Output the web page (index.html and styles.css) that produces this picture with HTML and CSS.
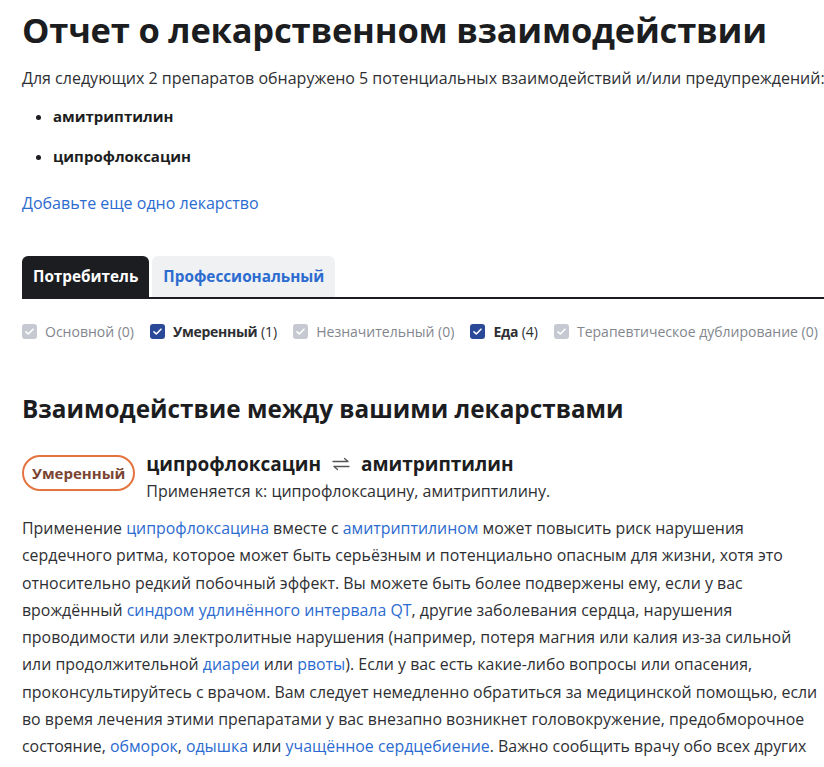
FILE: index.html
```html
<!DOCTYPE html>
<html lang="ru">
<head>
    <meta charset="UTF-8">
    <meta name="viewport" content="width=device-width, initial-scale=1.0">
    <title>Отчет о лекарственном взаимодействии</title>
    <link rel="stylesheet" href="styles.css">
</head>
<body>
    <div class="page">
        <h1>Отчет о лекарственном взаимодействии</h1>
        <p class="summary">Для следующих 2 препаратов обнаружено 5 потенциальных взаимодействий и/или предупреждений:</p>

        <ul class="drug-list">
            <li>амитриптилин</li>
            <li>ципрофлоксацин</li>
        </ul>

        <a href="#" class="add-link">Добавьте еще одно лекарство</a>

        <!-- Вкладки -->
        <div class="tabs">
            <span class="tab active">Потребитель</span>
            <span class="tab">Профессиональный</span>
        </div>

        <!-- Фильтры -->
        <div class="filters">
            <label class="filter"><span class="box"></span>Основной (0)</label>
            <label class="filter on"><span class="box"></span><b>Умеренный</b>&nbsp;(1)</label>
            <label class="filter"><span class="box"></span>Незначительный (0)</label>
            <label class="filter on"><span class="box"></span><b>Еда</b>&nbsp;(4)</label>
            <label class="filter"><span class="box"></span>Терапевтическое дублирование (0)</label>
        </div>

        <h2>Взаимодействие между вашими лекарствами</h2>

        <div class="interaction">
            <span class="badge">Умеренный</span>
            <div class="interaction-head">
                <div class="pair">ципрофлоксацин
                    <svg class="swap" width="20" height="14" viewBox="0 0 20 14">
                        <path d="M2 4.5h15M13.5 1.5l3.5 3M18 9.5H3M6.5 12.5L3 9.5" fill="none" stroke="#555" stroke-width="1.3" stroke-linecap="round"/>
                    </svg>
                    амитриптилин</div>
                <div class="applies">Применяется к: ципрофлоксацину, амитриптилину.</div>
            </div>
        </div>

        <p class="text">Применение <a href="#">ципрофлоксацина</a> вместе с <a href="#">амитриптилином</a> может повысить риск нарушения сердечного ритма, которое может быть серьёзным и потенциально опасным для жизни, хотя это относительно редкий побочный эффект. Вы можете быть более подвержены ему, если у вас врождённый <a href="#">синдром удлинённого интервала QT</a>, другие заболевания сердца, нарушения проводимости или электролитные нарушения (например, потеря магния или калия из-за сильной или продолжительной <a href="#">диареи</a> или <a href="#">рвоты</a>). Если у вас есть какие-либо вопросы или опасения, проконсультируйтесь с врачом. Вам следует немедленно обратиться за медицинской помощью, если во время лечения этими препаратами у вас внезапно возникнет головокружение, предобморочное состояние, <a href="#">обморок</a>, <a href="#">одышка</a> или <a href="#">учащённое сердцебиение</a>. Важно сообщить врачу обо всех других</p>
    </div>
</body>
</html>
```

FILE: styles.css
```css
body {
    margin: 0;
    font-family: "Open Sans", "Noto Sans", sans-serif;
    color: #2e2f33;
    background: #fff;
    overflow: hidden;
}

.page {
    padding: 6px 0 0 22px;
}

a {
    color: #2c6bd0;
    text-decoration: none;
}

h1 {
    margin: 0;
    font-size: 34.5px;
    font-weight: 700;
    color: #1c1d21;
    letter-spacing: -0.2px;
}

.summary {
    margin: 14px 0 0;
    font-size: 16px;
    white-space: nowrap;
}

.drug-list {
    margin: 16px 0 0;
    padding-left: 31px;
    font-size: 15px;
    font-weight: 700;
    color: #1c1d21;
}

.drug-list li {
    line-height: 22px;
    margin-bottom: 18px;
}

.add-link {
    display: inline-block;
    margin-top: 7px;
    font-size: 16px;
}

/* Вкладки */
.tabs {
    display: flex;
    gap: 3px;
    margin-top: 42px;
    border-bottom: 2px solid #1c1d21;
}

.tab {
    padding: 10px 11px 11px;
    border-radius: 6px 6px 0 0;
    background: #f0f1f3;
    color: #2c6bd0;
    font-size: 15.3px;
    font-weight: 700;
}

.tab.active {
    background: #1c1d21;
    color: #fff;
}

/* Фильтры */
.filters {
    display: flex;
    gap: 16px;
    margin-top: 23px;
    font-size: 14px;
    color: #83868e;
    white-space: nowrap;
}

.filter {
    display: flex;
    align-items: center;
}

.filter b {
    letter-spacing: -0.3px;
}

.filter.on {
    color: #2e2f33;
}

.box {
    width: 15px;
    height: 15px;
    margin-right: 8px;
    border-radius: 3px;
    background: #c6c9d1 url("data:image/svg+xml,%3Csvg xmlns='http://www.w3.org/2000/svg' viewBox='0 0 15 15'%3E%3Cpath d='M4 7.8l2.3 2.2 4.7-4.8' fill='none' stroke='white' stroke-width='1.6' stroke-linecap='round' stroke-linejoin='round'/%3E%3C/svg%3E") center / 15px 15px no-repeat;
}

.filter.on .box {
    background-color: #2a4997;
}

h2 {
    margin: 51px 0 0;
    font-size: 24.3px;
    font-weight: 700;
    color: #1c1d21;
}

.interaction {
    display: flex;
    align-items: flex-start;
    gap: 11px;
    margin-top: 26px;
}

.badge {
    margin-top: 4px;
    padding: 6px 8px;
    border: 2px solid #e4743f;
    border-radius: 20px;
    color: #7b4532;
    font-size: 15px;
    line-height: 20px;
    font-weight: 700;
}

.pair {
    display: flex;
    align-items: center;
    gap: 10px;
    font-size: 19px;
    font-weight: 700;
    color: #1c1d21;
    line-height: 26px;
}

.applies {
    font-size: 16px;
    line-height: 22px;
    margin-top: 3px;
}

.text {
    margin: 13px 0 0;
    font-size: 15.9px;
    line-height: 27.3px;
}
```
